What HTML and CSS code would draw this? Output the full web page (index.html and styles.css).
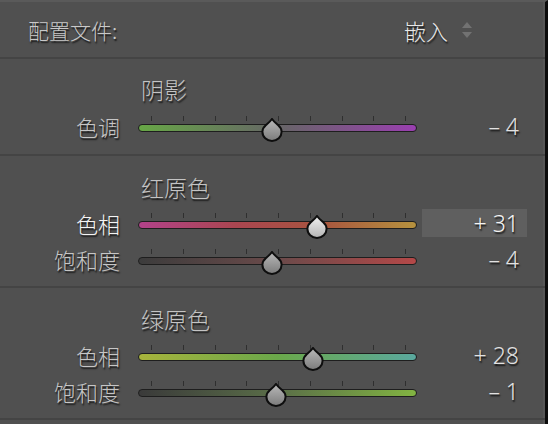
FILE: index.html
```html
<!DOCTYPE html>
<html lang="zh-CN">
<head>
  <meta charset="UTF-8" />
  <meta name="viewport" content="width=device-width, initial-scale=1.0"/>
  <title>分离色调</title>
  <link rel="stylesheet" href="styles.css">
</head>
<body>
  <!-- shared gradients for the slider thumbs -->
  <svg class="defs" aria-hidden="true">
    <defs>
      <linearGradient id="thumbFill" x1="0" y1="0" x2="0" y2="1">
        <stop offset="0" stop-color="#b9b9b9"/>
        <stop offset="1" stop-color="#7b7b7b"/>
      </linearGradient>
      <linearGradient id="thumbFillActive" x1="0" y1="0" x2="0" y2="1">
        <stop offset="0" stop-color="#f2f2f2"/>
        <stop offset="1" stop-color="#b4b4b4"/>
      </linearGradient>
    </defs>
  </svg>

  <div class="panel">
    <div class="profile-row">
      <span class="profile-label">配置文件:</span>
      <span class="profile-select">
        嵌入
        <svg class="stepper" width="10" height="16" viewBox="0 0 10 16">
          <path d="M0 6 L5 0 L10 6 Z"/>
          <path d="M0 10 L10 10 L5 16 Z"/>
        </svg>
      </span>
    </div>

    <section class="group group-tone">
      <h2 class="group-title">阴影</h2>
      <div class="slider-row">
        <span class="row-label">色调</span>
        <div class="slider">
          <div class="ticks"><i></i><i></i><i></i><i></i><i></i><i></i><i></i><i></i><i></i></div>
          <div class="track track-tint"></div>
          <svg class="thumb" style="--v:-4" viewBox="0 0 22 24"><path d="M11 1 C12.5 3.2 14.6 4.9 17 7 C19.5 9.2 20.6 11.2 20.6 13.8 A9.6 9.2 0 0 1 1.4 13.8 C1.4 11.2 2.5 9.2 5 7 C7.4 4.9 9.5 3.2 11 1 Z"/></svg>
        </div>
        <span class="row-value">– 4</span>
      </div>
    </section>

    <section class="group">
      <h2 class="group-title">红原色</h2>
      <div class="slider-row active">
        <span class="row-label">色相</span>
        <div class="slider">
          <div class="ticks"><i></i><i></i><i></i><i></i><i></i><i></i><i></i><i></i><i></i></div>
          <div class="track track-red-hue"></div>
          <svg class="thumb" style="--v:31" viewBox="0 0 22 24"><path d="M11 1 C12.5 3.2 14.6 4.9 17 7 C19.5 9.2 20.6 11.2 20.6 13.8 A9.6 9.2 0 0 1 1.4 13.8 C1.4 11.2 2.5 9.2 5 7 C7.4 4.9 9.5 3.2 11 1 Z"/></svg>
        </div>
        <span class="row-value">+ 31</span>
      </div>
      <div class="slider-row">
        <span class="row-label">饱和度</span>
        <div class="slider">
          <div class="ticks"><i></i><i></i><i></i><i></i><i></i><i></i><i></i><i></i><i></i></div>
          <div class="track track-red-sat"></div>
          <svg class="thumb" style="--v:-4" viewBox="0 0 22 24"><path d="M11 1 C12.5 3.2 14.6 4.9 17 7 C19.5 9.2 20.6 11.2 20.6 13.8 A9.6 9.2 0 0 1 1.4 13.8 C1.4 11.2 2.5 9.2 5 7 C7.4 4.9 9.5 3.2 11 1 Z"/></svg>
        </div>
        <span class="row-value">– 4</span>
      </div>
    </section>

    <section class="group">
      <h2 class="group-title">绿原色</h2>
      <div class="slider-row">
        <span class="row-label">色相</span>
        <div class="slider">
          <div class="ticks"><i></i><i></i><i></i><i></i><i></i><i></i><i></i><i></i><i></i></div>
          <div class="track track-green-hue"></div>
          <svg class="thumb" style="--v:28" viewBox="0 0 22 24"><path d="M11 1 C12.5 3.2 14.6 4.9 17 7 C19.5 9.2 20.6 11.2 20.6 13.8 A9.6 9.2 0 0 1 1.4 13.8 C1.4 11.2 2.5 9.2 5 7 C7.4 4.9 9.5 3.2 11 1 Z"/></svg>
        </div>
        <span class="row-value">+ 28</span>
      </div>
      <div class="slider-row">
        <span class="row-label">饱和度</span>
        <div class="slider">
          <div class="ticks"><i></i><i></i><i></i><i></i><i></i><i></i><i></i><i></i><i></i></div>
          <div class="track track-green-sat"></div>
          <svg class="thumb" style="--v:-1" viewBox="0 0 22 24"><path d="M11 1 C12.5 3.2 14.6 4.9 17 7 C19.5 9.2 20.6 11.2 20.6 13.8 A9.6 9.2 0 0 1 1.4 13.8 C1.4 11.2 2.5 9.2 5 7 C7.4 4.9 9.5 3.2 11 1 Z"/></svg>
        </div>
        <span class="row-value">– 1</span>
      </div>
    </section>
  </div>
</body>
</html>
```

FILE: styles.css
```css
body {
  margin: 0;
  background: #505050;
  font-family: "Noto Sans CJK SC", "Noto Sans", sans-serif;
  font-weight: 300;
  color: #c9c9c9;
  overflow: hidden;
}
.defs {
  position: absolute;
  width: 0;
  height: 0;
}
.panel {
  width: 548px;
  height: 424px;
  box-sizing: border-box;
  border-top: 2px solid #5a5a5a;
  border-right: 3px solid #0c0c0c;
  box-shadow: inset -2px 0 0 #565656;
}

/* header row */
.profile-row {
  height: 55px;
  display: flex;
  align-items: center;
  padding: 0 73px 0 28px;
  border-bottom: 2px solid #444;
  font-size: 21px;
  text-shadow: 1px 1.5px 1.5px rgba(0,0,0,0.75);
}
.profile-select {
  margin-left: auto;
  display: flex;
  align-items: center;
  gap: 14px;
  color: #e8e8e8;
  font-size: 22px;
}
.stepper {
  fill: #727272;
}

/* groups */
.group {
  padding: 17px 0 9px;
  border-bottom: 2px solid #444;
}
.group-tone {
  padding: 16px 0 10px;
}
.group-title {
  margin: 0 0 4px 141px;
  height: 28px;
  line-height: 28px;
  font-size: 23px;
  font-weight: 300;
  color: #c4c4c4;
  text-shadow: 1px 1.5px 1.5px rgba(0,0,0,0.75);
}
.group-tone .group-title {
  margin-bottom: 5px;
}

.slider-row {
  display: flex;
  align-items: center;
  height: 36px;
}
.row-label {
  width: 120px;
  text-align: right;
  font-size: 22px;
  color: #c6c6c6;
  text-shadow: 1px 1.5px 1.5px rgba(0,0,0,0.75);
}
.active .row-label {
  color: #f4f4f4;
}
.slider {
  position: relative;
  width: 279px;
  height: 36px;
  margin-left: 18px;
}
.ticks {
  display: flex;
  justify-content: space-between;
  margin: 8px 11px 0 13px;
  height: 5px;
}
.ticks i {
  width: 1px;
  background: #2f2f2f;
}
.track {
  margin-top: 3px;
  height: 8px;
  box-sizing: border-box;
  border: 1.5px solid #1e1e1e;
  border-radius: 4px;
}
.track-tint {
  background: linear-gradient(to right, #67a746, #666 50%, #9a3fb0);
}
.track-red-hue {
  background: linear-gradient(to right, #b2428a, #aa4650 35%, #a8543f 65%, #b6923e);
}
.track-red-sat {
  background: linear-gradient(to right, #3c3c3c, #6a4a4a 50%, #b44848);
}
.track-green-hue {
  background: linear-gradient(to right, #a8b43c, #6aa84a 50%, #5aa89e);
}
.track-green-sat {
  background: linear-gradient(to right, #3a3a3a, #5a6e48 50%, #82b442);
}
.thumb {
  position: absolute;
  top: 10px;
  left: calc(128.5px + var(--v) * 1.27px);
  width: 22px;
  height: 24px;
  fill: url(#thumbFill);
  stroke: #0e0e0e;
  stroke-width: 2;
}
.active .thumb {
  fill: url(#thumbFillActive);
}
.row-value {
  width: 105px;
  height: 28px;
  margin-left: 5px;
  box-sizing: border-box;
  padding-right: 8px;
  text-align: right;
  line-height: 28px;
  font-family: "Noto Sans", sans-serif;
  font-size: 23px;
  color: #e2e2e2;
  text-shadow: 1px 1.5px 1.5px rgba(0,0,0,0.75);
  white-space: pre;
}
.active .row-value {
  background: #5f5f5f;
  color: #f4f4f4;
}
```
